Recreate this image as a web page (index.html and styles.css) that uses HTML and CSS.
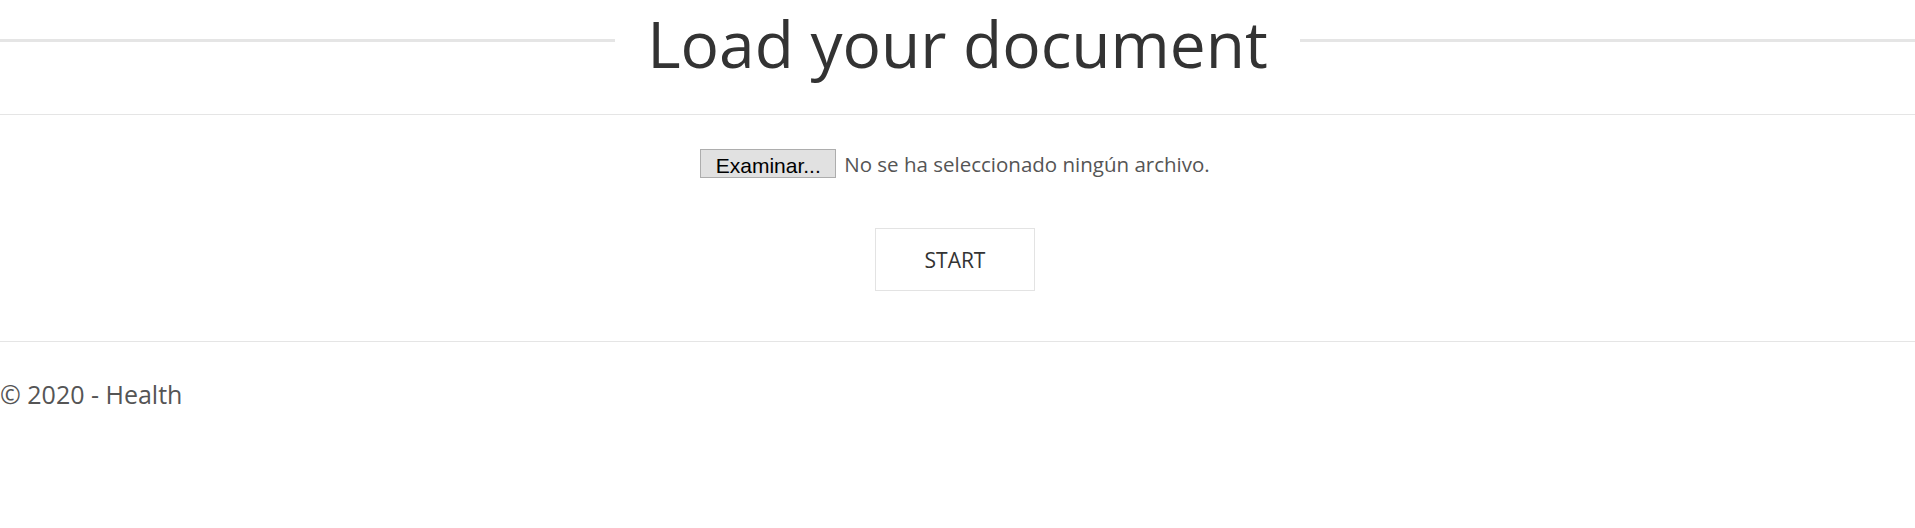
FILE: index.html
```html
<!DOCTYPE html>
<html lang="es">
<head>
<meta charset="utf-8">
<title>Load your document</title>
<link rel="stylesheet" href="styles.css">
</head>
<body>
<header class="page-header">
  <span class="rule"></span>
  <h1 class="title">Load your document</h1>
  <span class="rule"></span>
</header>
<hr class="divider">
<main class="upload">
  <div class="file-field">
    <span class="file-button">Examinar...</span>
    <span class="file-status">No se ha seleccionado ningún archivo.</span>
  </div>
  <button class="start-button" type="button">START</button>
</main>
<hr class="divider">
<footer class="footer">
  <p class="footer-text">© 2020 - Health</p>
</footer>
</body>
</html>
```

FILE: styles.css
```css
html, body {
  margin: 0;
  padding: 0;
  background: #ffffff;
}

body {
  font-family: "Open Sans", "Noto Sans", sans-serif;
  color: #333333;
}

.page-header {
  display: flex;
  align-items: flex-start;
  padding-bottom: 30px;
}

.rule {
  flex: 1;
  height: 3px;
  margin-top: 39px;
  background: #e5e5e5;
}

.title {
  margin: 4px 32px 0;
  font-size: 64px;
  line-height: 80px;
  font-weight: 400;
  color: #333333;
  white-space: nowrap;
}

.divider {
  margin: 0;
  border: 0;
  height: 1px;
  background: #e5e5e5;
}

.upload {
  display: flex;
  flex-direction: column;
  align-items: center;
  padding: 34px 5px 50px 0;
}

.file-field {
  display: flex;
  align-items: center;
  gap: 8px;
}

.file-button {
  box-sizing: border-box;
  width: 136px;
  height: 29px;
  display: flex;
  align-items: center;
  justify-content: center;
  padding-top: 4px;
  background: #e1e1e1;
  border: 1px solid #adadad;
  color: #000000;
  font-family: "Liberation Sans", "Arial", sans-serif;
  font-size: 21px;
}

.file-status {
  color: #555555;
  font-size: 20.5px;
}

.start-button {
  box-sizing: border-box;
  margin-top: 50px;
  width: 160px;
  height: 63px;
  background: #ffffff;
  border: 1px solid #e3e3e3;
  font-family: "Open Sans", "Noto Sans", sans-serif;
  font-size: 21px;
  color: #333333;
  padding: 0;
}

.footer {
  padding-top: 37px;
}

.footer-text {
  margin: 0;
  font-size: 25px;
  line-height: 30px;
  color: #555555;
}
```
